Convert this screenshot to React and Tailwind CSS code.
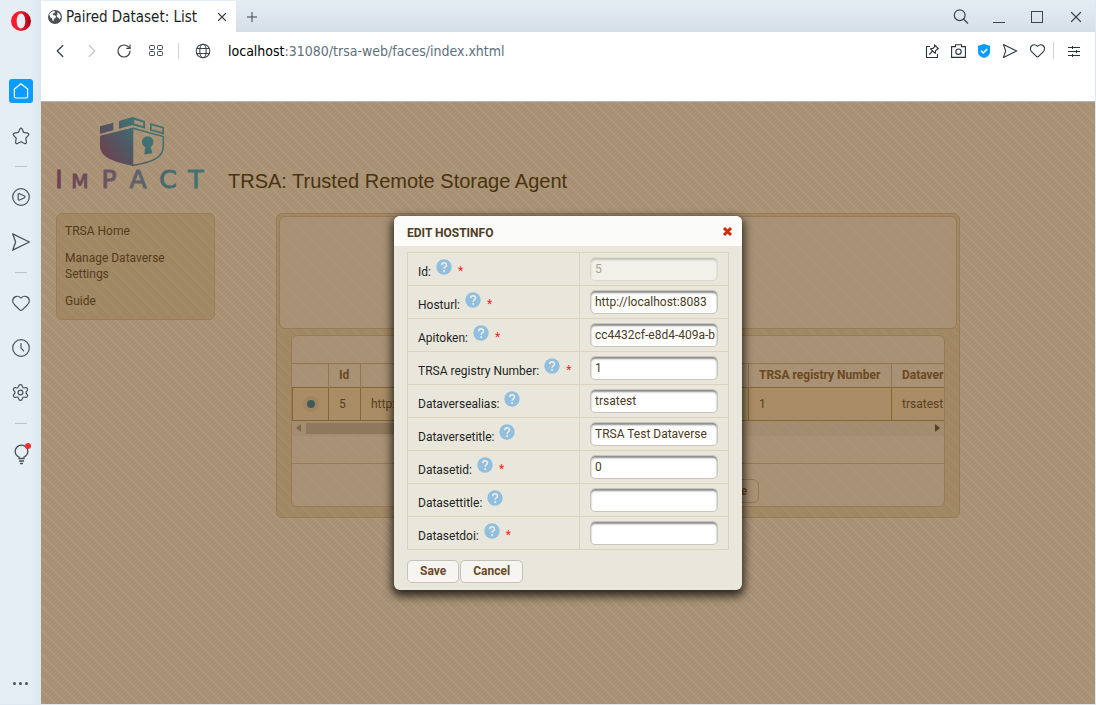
import React from "react";
import { Heart, Settings, Plus, X, ChevronLeft, ChevronRight, RotateCw } from "lucide-react";

const fields = [
  { id: "id", label: "Id:", required: true, value: "5", disabled: true },
  { id: "hosturl", label: "Hosturl:", required: true, value: "http://localhost:8083" },
  { id: "apitoken", label: "Apitoken:", required: true, value: "cc4432cf-e8d4-409a-b" },
  { id: "registry", label: "TRSA registry Number:", required: true, value: "1" },
  { id: "alias", label: "Dataversealias:", value: "trsatest" },
  { id: "title", label: "Dataversetitle:", value: "TRSA Test Dataverse" },
  { id: "datasetid", label: "Datasetid:", required: true, value: "0" },
  { id: "datasettitle", label: "Datasettitle:", value: "" },
  { id: "datasetdoi", label: "Datasetdoi:", required: true, value: "" },
];

function SendIcon({ size = 20 }) {
  return (
    <svg width={size} height={size} viewBox="0 0 20 20" fill="none" stroke="currentColor" strokeWidth="1.3" strokeLinejoin="round">
      <path d="M1.7 1.8 18.4 10 1.7 18.2 4.6 10Z" />
    </svg>
  );
}

function OperaLogo() {
  return (
    <svg width="20" height="20" viewBox="0 0 20 20">
      <defs>
        <linearGradient id="opera" x1="0" x2="1" y1="0" y2="0">
          <stop offset="0.4" stopColor="#ff1b2d" />
          <stop offset="1" stopColor="#a70014" />
        </linearGradient>
      </defs>
      <path fill="url(#opera)" fillRule="evenodd" d="M10 0a10 10 0 1 0 0 20a10 10 0 1 0 0-20ZM10 2.6c2.6 0 4.3 3.2 4.3 7.4s-1.700 7.400-4.300 7.400S5.700 14.200 5.700 10S7.400 2.600 10 2.600Z" />
    </svg>
  );
}

function SideItem({ label, children }) {
  return (
    <button aria-label={label} className="flex h-[45px] w-full items-center justify-center">
      {children}
    </button>
  );
}

function SideRule() {
  return (
    <div className="flex h-4 items-center">
      <div className="h-px w-3 bg-[#b4c6d0]" />
    </div>
  );
}

function Sidebar() {
  return (
    <aside className="flex w-[41px] shrink-0 flex-col items-center bg-linear-to-r from-[#e5edf5] from-75% to-[#dae6ef] text-[#46535c]">
      <div className="mb-[27px] flex h-[41px] items-center">
        <OperaLogo />
      </div>
      <SideItem label="Home">
        <span className="flex size-6 items-center justify-center rounded-[3px] bg-[#0a9dff]">
          <svg width="16" height="16" viewBox="0 0 16 16" fill="none" stroke="#fff" strokeWidth="1.2" strokeLinejoin="round">
            <path d="M8 .8 14.600 6V13.500a1.500 1.500 0 0 1-1.500 1.500H2.900a1.500 1.500 0 0 1-1.500-1.500V6Z" />
          </svg>
        </span>
      </SideItem>
      <SideItem label="Bookmarks">
        <svg width="18" height="18" viewBox="0 0 18 18" fill="none" stroke="currentColor" strokeWidth="1.2" strokeLinejoin="round">
          <path d="M7.900 1.900c.5-1 1.700-1 2.200 0l1.600 3.500 4 .7c1.100.2 1.500 1.400.7 2.200l-2.600 2.900.6 4c.1 1.100-.9 1.800-1.900 1.300L9 14.700l-3.500 1.800c-1 .5-2-.2-1.900-1.300l.6-4L1.600 8.300C.8 7.500 1.200 6.300 2.300 6.100l4-.7Z" />
        </svg>
      </SideItem>
      <SideRule />
      <SideItem label="Player">
        <svg width="18" height="18" viewBox="0 0 18 18" fill="none" stroke="currentColor" strokeWidth="1.2" strokeLinejoin="round">
          <circle cx="9" cy="9" r="8.300" />
          <path d="M6.200 6.600c0-.8.6-1.100 1.300-.9l4.600 2c1.200.5 1.200 1.800 0 2.300l-4.600 2c-.7.2-1.300-.1-1.300-.900Z" />
        </svg>
      </SideItem>
      <SideItem label="Flow"><SendIcon /></SideItem>
      <SideRule />
      <SideItem label="Favourites"><Heart size={20} strokeWidth={1.4} /></SideItem>
      <SideItem label="History">
        <svg width="18" height="18" viewBox="0 0 18 18" fill="none" stroke="currentColor" strokeWidth="1.2" strokeLinecap="round">
          <circle cx="9" cy="9" r="8.300" />
          <path d="M9 4.500V9l2.600 2.800" />
        </svg>
      </SideItem>
      <SideItem label="Settings"><Settings size={19} strokeWidth={1.5} /></SideItem>
      <SideRule />
      <SideItem label="Tips">
        <svg width="20" height="22" viewBox="0 0 20 22" fill="none" stroke="currentColor" strokeWidth="1.300">
          <path d="M8 15.500v-1.500C5.600 12.800 4.200 10.800 4.200 8.400a6.300 6.300 0 0 1 12.600 0c0 2.400-1.400 4.400-3.800 5.600v1.500ZM8 18h5M9 20.500h3" />
          <circle cx="17" cy="3" r="3" fill="#ff2d2d" stroke="none" />
        </svg>
      </SideItem>
      <div className="grow" />
      <button aria-label="More" className="mb-[19px] flex gap-[3px]">
        <span className="size-[3px] rounded-full bg-[#46535c]" />
        <span className="size-[3px] rounded-full bg-[#46535c]" />
        <span className="size-[3px] rounded-full bg-[#46535c]" />
      </button>
    </aside>
  );
}

function TabBar() {
  return (
    <div className="flex h-8 items-stretch bg-linear-to-b from-[#e5edf5] to-[#d5dfe8] pt-px text-[#3a444c]">
      <div className="flex w-[195px] items-center bg-white px-[7px]">
        <svg width="14" height="14" viewBox="0 0 14 14">
          <circle cx="7" cy="7" r="7" fill="#4c5156" />
          <path fill="#fff" d="M1.300 4.500C2 2.800 3.800 1.300 6 1.100L7.300 2 6 3.200 4.800 3.500 4.700 5 6.800 5.200 8 6.600 7.400 8 5.900 8.900 5.600 11 4.600 10.800 4 8.400 2.200 7.300ZM9 2.200 11 3.200 12.400 5.300 12.800 7.500 11.500 9.500 10.700 7.800 9.300 7.300 8.600 5.600 9.700 4.300Z" />
        </svg>
        <span className="ml-1 grow whitespace-nowrap pt-px text-[15px] text-[#1c1f22]">Paired Dataset: List</span>
        <button aria-label="Close tab"><X size={14} strokeWidth={2} /></button>
      </div>
      <button aria-label="New tab" className="ml-2 flex items-center"><Plus size={16} strokeWidth={1.5} /></button>
      <div className="grow" />
      <div className="flex items-center gap-[22px] pr-[10px]">
        <button aria-label="Search">
          <svg width="16" height="16" viewBox="0 0 16 16" fill="none" stroke="currentColor" strokeWidth="1.200">
            <circle cx="6.700" cy="6.200" r="5.400" /><path d="m10.500 10 4.500 4.500" />
          </svg>
        </button>
        <button aria-label="Minimise" className="flex h-3 w-4 items-end justify-center"><span className="h-px w-3 bg-[#3a444c]" /></button>
        <button aria-label="Maximise" className="flex size-4 items-center justify-center"><span className="size-3 border border-[#3a444c]" /></button>
        <button aria-label="Close"><X size={18} strokeWidth={1.600} /></button>
      </div>
    </div>
  );
}

function Toolbar() {
  return (
    <div className="bg-white pb-8 text-[#3a444c]">
      <div className="flex h-[37px] items-center pl-[11px] pr-[15px]">
        <div className="flex items-center gap-4">
          <button aria-label="Back" className="flex size-4 items-center justify-center"><ChevronLeft size={22} strokeWidth={1.400} className="shrink-0" /></button>
          <button aria-label="Forward" className="flex size-4 items-center justify-center text-[#c4c8cb]"><ChevronRight size={22} strokeWidth={1.400} className="shrink-0" /></button>
          <button aria-label="Reload"><RotateCw size={16} strokeWidth={1.800} /></button>
          <button aria-label="Speed dial" className="flex size-4 items-center justify-center">
            <svg width="14" height="12" viewBox="0 0 14 12" fill="none" stroke="currentColor">
              <rect x=".5" y=".5" width="5" height="4" rx="1" /><rect x="8.500" y=".5" width="5" height="4" rx="1" />
              <rect x=".5" y="6.500" width="5" height="4" rx="1" /><rect x="8.500" y="6.500" width="5" height="4" rx="1" />
            </svg>
          </button>
        </div>
        <div className="ml-[14px] mr-4 h-4 w-px bg-[#cfd3d6]" />
        <svg width="16" height="16" viewBox="0 0 16 16" fill="none" stroke="currentColor" strokeWidth="1.100">
          <circle cx="8" cy="8" r="6.800" /><ellipse cx="8" cy="8" rx="3.200" ry="6.800" /><path d="M1.800 5.500h12.400M1.800 10.500h12.400" />
        </svg>
        <p className="ml-[17px] grow text-sm text-[#5d6f7c]"><span className="text-black">localhost</span>:31080/trsa-web/faces/index.xhtml</p>
        <div className="flex items-center gap-[11px] text-[#27343c]">
          <button aria-label="Pin">
            <svg width="15" height="14" viewBox="0 0 15 14" fill="none" stroke="currentColor" strokeWidth="1.100" strokeLinejoin="round">
              <path d="M5 2.500H1.500v11h11V10" />
              <path d="m9.500.8 4 4-1.300.3-1.700 1.700-.3 2.600L5.500 4.800l2.600-.4 1.700-1.700ZM7.500 7.200 4.200 10.500" />
            </svg>
          </button>
          <button aria-label="Snapshot">
            <svg width="15" height="14" viewBox="0 0 15 14" fill="none" stroke="currentColor" strokeWidth="1.100">
              <path d="M.6 13.400V2.600H4.500V.8h6v1.800h3.900v10.800Z" /><circle cx="7.500" cy="7.700" r="2.700" />
            </svg>
          </button>
          <button aria-label="Ad blocker">
            <svg width="14" height="14" viewBox="0 0 14 14">
              <path fill="#0a9dff" d="M7 0 13 1.800V8c0 3-2.500 5-6 6C3.500 13 1 11 1 8V1.800Z" />
              <path d="m4 6.800 2.300 2.200L10.200 5" fill="none" stroke="#fff" strokeWidth="1.500" />
            </svg>
          </button>
          <button aria-label="Send to Flow"><SendIcon size={16} /></button>
          <button aria-label="Favourite"><Heart size={17} strokeWidth={1.500} /></button>
        </div>
        <div className="ml-[7px] mr-[14px] h-[17px] w-px bg-[#cfd3d6]" />
        <button aria-label="Easy setup">
          <svg width="12" height="12" viewBox="0 0 12 12" stroke="#27343c" fill="none">
            <path d="M0 2.500h12M0 6.500h12M0 10.500h12M4.500 1v3M8.500 5v3M4.500 9v3" />
          </svg>
        </button>
      </div>
    </div>
  );
}

function ImpactLogo() {
  return (
    <svg width="154" height="75" viewBox="0 0 154 75" role="img" aria-label="Impact logo" className="overflow-visible">
      <defs>
        <linearGradient id="shield" gradientUnits="userSpaceOnUse" x1="50" y1="48" x2="88" y2="20">
          <stop offset="0" stopColor="#70404f" />
          <stop offset="0.65" stopColor="#4b5c66" />
          <stop offset="1" stopColor="#3f7270" />
        </linearGradient>
        <linearGradient id="word" gradientUnits="userSpaceOnUse" x1="0" y1="0" x2="153" y2="0">
          <stop offset="0" stopColor="#70404f" />
          <stop offset="0.5" stopColor="#65606a" />
          <stop offset="0.75" stopColor="#456c70" />
          <stop offset="1" stopColor="#3f7673" />
        </linearGradient>
      </defs>
      <g fill="url(#shield)">
        <path d="M45 10.300 58.300 6.700V14.300L45 18Z" />
        <path fillRule="evenodd" d="M64 5 77.300 1 90 5V12.700L77.300 9 64 12.700ZM79.300 3.800V7.500L88.300 10.300V6.500Z" />
        <path fillRule="evenodd" d="M95 7 109 11V18.500L95 14.600ZM96.700 9.300V13.300L107.300 16.200V12.300Z" />
        <path d="M45 19.800 78.300 11.500V50C58 46 45 41 45 30Z" />
        <path d="M78 12.200 108.300 20.500V30C108.300 41 99 46 77 49.500" fill="none" stroke="url(#shield)" strokeWidth="1.600" />
        <circle cx="92.700" cy="26" r="5.800" />
        <path d="M90.500 29 89.300 38.500 97.500 37.200 95.200 29Z" />
      </g>
      <text y="72" x="4 25 54 83 113 141" textAnchor="middle" fill="url(#word)" stroke="url(#word)" strokeWidth="1" className="font-['DejaVu_Sans'] text-[25px]">
        I<tspan className="text-[20px]">M</tspan>PACT
      </text>
    </svg>
  );
}

function HostTable() {
  const th = "border-l border-[#927653] px-[10px] font-bold";
  const td = "border border-[#866633] border-r-0 px-[10px]";
  return (
    <div className="overflow-hidden">
      <table className="w-[1000px] table-fixed border-collapse text-left">
        <colgroup>
          <col className="w-9" />
          <col className="w-8" />
          <col className="w-[160px]" />
          <col className="w-[228px]" />
          <col className="w-[143px]" />
          <col />
        </colgroup>
        <thead className="text-[#6c481f]">
          <tr className="h-[23px]">
            <th className="px-[10px]" aria-label="Select" />
            <th className={th}>Id</th>
            <th className="border-l border-[#927653] text-center font-bold">Hosturl</th>
            <th className="border-l border-[#927653] text-center font-bold">Apitoken</th>
            <th className={th}>TRSA registry Number</th>
            <th className={th}>Dataversealias</th>
          </tr>
        </thead>
        <tbody className="bg-[rgba(170,136,80,0.4)] text-[#58401f]">
          <tr className="h-[33px]">
            <td className="border border-[#866633]">
              <input type="radio" aria-label="Select host 5" defaultChecked className="mx-auto block size-4 appearance-none rounded-full border-4 border-[#a18662] bg-[#3f5a59]" />
            </td>
            <td className={td}>5</td>
            <td className={td}>http://localhost:8083</td>
            <td className={td}>cc4432cf-e8d4-409a-b</td>
            <td className={td}>1</td>
            <td className={td}>trsatest</td>
          </tr>
        </tbody>
      </table>
    </div>
  );
}

function EditDialog() {
  return (
    <form role="dialog" aria-labelledby="dialog-title" className="w-[348px] overflow-hidden rounded-md bg-[#e9e7db] shadow-[0_4px_10px_2px_rgba(0,0,0,0.75)]">
      <div className="flex h-[30px] items-center justify-between bg-[#fbfbfa] pl-[13px] pr-[9px]">
        <h2 id="dialog-title" className="pt-[3px] font-bold text-[#4f3b22]">EDIT HOSTINFO</h2>
        <button type="button" aria-label="Close dialog">
          <svg width="11" height="11" viewBox="0 0 11 11"><path d="m2 2 7 7M9 2 2 9" stroke="#cb2c0c" strokeWidth="3" /></svg>
        </button>
      </div>
      <div className="px-[13px] pb-[7px] pt-[6px]">
        <table className="w-full table-fixed border-collapse text-[#1f1f1f]">
          <colgroup>
            <col className="w-[172px]" />
            <col />
          </colgroup>
          <tbody>
            {fields.map((f) => (
              <tr key={f.id} className="h-[33px]">
                <td className="border border-[#d9d3c0] pl-[10px]">
                  <span className="flex items-center">
                    <label htmlFor={f.id} className="whitespace-nowrap pt-[6px]">{f.label}</label>
                    <svg width="16" height="16" viewBox="0 0 16 16" className="mb-1 ml-[5px] shrink-0">
                      <circle cx="8" cy="8" r="7.700" fill="#91bfdd" />
                      <path d="M5.700 6.300c0-3.200 4.800-3.200 4.800-.3C10.500 7.700 8.100 7.900 8.100 9.800" fill="none" stroke="#f2f0e8" strokeWidth="1.500" />
                      <circle cx="8.100" cy="12" r="1" fill="#f2f0e8" />
                    </svg>
                    {f.required && <span className="ml-[6px] pt-1 leading-4 text-[#fb1c1c]">*</span>}
                  </span>
                </td>
                <td className="border border-[#d9d3c0] px-[10px]">
                  <input
                    id={f.id}
                    defaultValue={f.value}
                    disabled={f.disabled}
                    className="block h-6 w-full rounded-[5px] border border-[#c9c5bb] bg-white pb-px pl-1 pr-0 text-[#4a3a22] shadow-[inset_0_2px_2px_#8c8c8c] disabled:opacity-40"
                  />
                </td>
              </tr>
            ))}
          </tbody>
        </table>
        <div className="mt-[10px] flex gap-px font-bold text-[#6b4a25]">
          <button type="button" className="h-[23px] rounded-[5px] border border-[#c6c1b5] bg-[#f6f5f2] px-3 pb-px">Save</button>
          <button type="button" className="h-[23px] rounded-[5px] border border-[#c6c1b5] bg-[#f6f5f2] px-3 pb-px">Cancel</button>
        </div>
      </div>
    </form>
  );
}

function Page() {
  return (
    <main className="relative grow border-t border-[#b9b9b4] bg-[#a79074] bg-[image:linear-gradient(135deg,rgba(205,188,155,0.14)_12.5%,transparent_12.5%_50%,rgba(205,188,155,0.14)_50%_62.5%,transparent_62.5%),linear-gradient(45deg,rgba(205,188,155,0.16)_5%,transparent_5%_50%,rgba(205,188,155,0.16)_50%_55%,transparent_55%)] bg-size-[4px_4px,12px_12px] px-[14px] pt-[14px] font-[Roboto,sans-serif] text-xs">
      <header className="flex items-end gap-[19px]">
        <ImpactLogo />
        <h1 className="font-['Liberation_Sans',sans-serif] text-xl leading-5 text-[#49330f]">TRSA: Trusted Remote Storage Agent</h1>
      </header>
      <div className="mt-[22px] flex items-start gap-[61px] pl-px">
        <nav className="flex w-[159px] shrink-0 flex-col gap-[11px] rounded-md border border-[#9a7d58] bg-[rgba(150,120,72,0.36)] pb-[10px] pl-2 pr-8 pt-[9px] text-[#543a1a]">
          <a href="#home">TRSA Home</a>
          <a href="#manage">Manage Dataverse Settings</a>
          <a href="#guide">Guide</a>
        </nav>
        <section className="w-full min-w-0 max-w-[684px] rounded-md border border-[#987b56] bg-[rgba(150,120,72,0.36)] px-[2px] pb-[10px] pt-[2px]">
          <div className="h-[113px] rounded-md border border-[#987b56] bg-[rgba(178,157,138,0.4)]" />
          <div className="mx-3 mt-[6px] overflow-hidden rounded-md border border-[#987b56] bg-[rgba(178,157,138,0.4)]">
            <div className="h-7 border-b border-[#927653]" />
            <HostTable />
            <div className="flex h-[15px] items-center bg-[rgba(140,115,85,0.15)] px-1">
              <svg width="5" height="8" viewBox="0 0 5 8"><path d="M5 0v8L0 4Z" fill="#806848" /></svg>
              <div className="ml-[5px] h-[11px] w-2/5 bg-[#8f785b]" />
              <div className="grow" />
              <svg width="5" height="8" viewBox="0 0 5 8"><path d="M0 0v8L5 4Z" fill="#55401f" /></svg>
            </div>
            <div className="h-7 border-b border-[#987b56]" />
            <div className="flex justify-center gap-px pb-[3px] pt-[15px] font-bold text-[#6c481f]">
              {["Create", "View", "Edit", "Destroy", "Delete"].map((t) => (
                <button key={t} className="h-6 rounded-md border border-[#957751] px-[11px]">{t}</button>
              ))}
            </div>
          </div>
        </section>
      </div>
      <div className="absolute inset-0 flex items-center justify-center">
        <EditDialog />
      </div>
    </main>
  );
}

export default function App() {
  return (
    <div className="flex min-h-screen border-b border-r border-[#dfe8f0] font-['DejaVu_Sans_Condensed',sans-serif]">
      <Sidebar />
      <div className="flex min-w-0 grow flex-col">
        <TabBar />
        <Toolbar />
        <Page />
      </div>
    </div>
  );
}
